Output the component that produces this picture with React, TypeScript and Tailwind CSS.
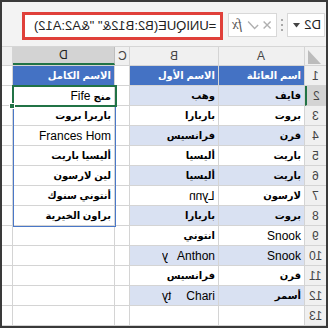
import React from "react";

const M = ({ children, className = "" }: { children: React.ReactNode; className?: string }) => (
  <span className={"inline-block [transform:scaleX(-1)] " + className}>{children}</span>
);

type Row = {
  n: number;
  d?: React.ReactNode;
  b?: React.ReactNode;
  a?: React.ReactNode;
};

const ar = (t: string) => (
  <span dir="rtl" className="font-bold text-[10px]">
    {t}
  </span>
);

const rows: Row[] = [
  { n: 1, d: ar("الاسم الكامل"), b: ar("الاسم الأول"), a: ar("اسم العائلة") },
  {
    n: 2,
    d: (
      <span dir="rtl">
        <span className="font-bold text-[10px]">منج</span> <span className="text-[12px]">Fife</span>
      </span>
    ),
    b: ar("وهب"),
    a: ar("فايف"),
  },
  { n: 3, d: ar("باربرا بروت"), b: ar("باربارا"), a: ar("بروت") },
  { n: 4, d: <span className="text-[12px]">Frances Hom</span>, b: ar("فرانسيس"), a: ar("قرن") },
  { n: 5, d: ar("أليسيا باريت"), b: ar("أليسيا"), a: ar("باريت") },
  { n: 6, d: ar("لين لارسون"), b: ar("أليسيا"), a: ar("باريت") },
  { n: 7, d: ar("أنتوني سنوك"), b: <M className="text-[12px]">Lynn</M>, a: ar("لارسون") },
  { n: 8, d: ar("براون الخيرية"), b: ar("باربارا"), a: ar("بروت") },
  { n: 9, b: ar("انتوني"), a: <span className="text-[12px]">Snook</span> },
  { n: 10, b: "anthon", a: <span className="text-[12px]">Snook</span> },
  { n: 11, b: ar("فرانسيس"), a: ar("قرن") },
  { n: 12, b: "chari", a: ar("أسمر") },
  { n: 13 },
];

export default function App() {
  return (
    <div className="w-[328px] h-[328px] border-2 border-[#3a3a3a] bg-white overflow-hidden flex flex-col font-['Liberation_Sans','DejaVu_Sans',sans-serif] text-[11px] text-black">
      {/* formula bar */}
      <div className="h-[45px] shrink-0 bg-[#f3f3f3] border-b border-[#d6d6d6] flex items-start pt-[10px] pl-[20px]">
        <div className="w-[201px] h-[28px] border-[3px] border-[#e0403a] bg-white flex items-center justify-end pr-[4px]">
          <M className="text-[13px] text-[#222] font-['Liberation_Sans',sans-serif]">=UNIQUE(B2:B12&amp;" "&amp;A2:A12)</M>
        </div>
        <div className="ml-[5px] mt-[1px] w-[49px] h-[24px] border border-[#d8d8d8] bg-white flex items-center justify-center">
          <div className="flex items-center gap-[3px] [transform:scaleX(-1)]">
            <svg width="10" height="10" viewBox="0 0 10 10">
              <path d="M1.5 1.5 L8.5 8.5 M8.5 1.5 L1.5 8.5" stroke="#b0b0b0" strokeWidth="1.4" fill="none" />
            </svg>
            <svg width="12" height="10" viewBox="0 0 12 10">
              <path d="M1 5 L4.5 8.5 L11 1.5" stroke="#b0b0b0" strokeWidth="1.4" fill="none" />
            </svg>
            <span className="font-['Liberation_Serif',serif] italic text-[14px] text-[#555] leading-none ml-[2px]">fx</span>
          </div>
        </div>
        <div className="w-[10px] h-[24px] mt-[1px] flex flex-col items-center justify-center gap-[3px]">
          <div className="w-[2px] h-[2px] bg-[#a8a8a8]" />
          <div className="w-[2px] h-[2px] bg-[#a8a8a8]" />
          <div className="w-[2px] h-[2px] bg-[#a8a8a8]" />
        </div>
        <div className="w-[38px] h-[24px] mt-[1px] border border-[#d8d8d8] bg-white flex items-center">
          <div className="w-full flex items-center justify-between pl-[3px] pr-[5px] [transform:scaleX(-1)]">
            <span className="text-[13px] text-[#222]">D2</span>
            <svg width="7" height="5" viewBox="0 0 7 5">
              <path d="M0 0 L7 0 L3.5 4.5 Z" fill="#444" />
            </svg>
          </div>
        </div>
      </div>

      {/* column headers */}
      <div className="h-[19px] shrink-0 flex bg-[#f0f0f0] text-[12px] text-[#444] border-b border-[#d4d4d4]">
        <div className="w-[11px] border-r border-[#d4d4d4]" />
        <div className="w-[102px] bg-[#d3d3d3] border-r border-[#bdbdbd] border-b-2 border-b-[#217346] flex items-center justify-center">
          <M className="text-[#222]">D</M>
        </div>
        <div className="w-[15px] border-r border-[#d4d4d4] flex items-center justify-center overflow-hidden">
          <M>C</M>
        </div>
        <div className="w-[89px] border-r border-[#d4d4d4] flex items-center justify-center">
          <M>B</M>
        </div>
        <div className="w-[86px] border-r border-[#d4d4d4] flex items-center justify-center">
          <M>A</M>
        </div>
        <div className="w-[21px] flex items-end pl-[3px] pb-[1px]">
          <svg width="13" height="14" viewBox="0 0 13 14">
            <path d="M0 0 L0 14 L13 14 Z" fill="#bcbcbc" />
          </svg>
        </div>
      </div>

      {/* rows */}
      <div className="relative flex flex-col">
        {rows.map((r) => {
          const head = r.n === 1;
          const band = !head && r.n <= 12 && r.n % 2 === 0;
          const tableBg = head ? "bg-[#4472c4] text-white" : band ? "bg-[#d9e1f2]" : "bg-white";
          const inTable = r.n <= 12;
          return (
            <div key={r.n} className="h-[20px] flex">
              <div className="w-[11px] border-r border-b border-[#d4d4d4]" />
              <div
                className={
                  "w-[102px] border-r border-b border-[#d4d4d4] flex items-center justify-end pr-[3px] whitespace-nowrap overflow-hidden " +
                  (head ? "bg-[#4472c4] text-white" : "bg-white")
                }
              >
                {r.d}
              </div>
              <div className="w-[15px] border-r border-b border-[#d4d4d4] bg-white" />
              <div
                className={
                  "w-[89px] border-r border-b border-[#d4d4d4] flex items-center pr-[3px] whitespace-nowrap " +
                  (inTable ? tableBg : "bg-white") +
                  (r.b === "anthon" || r.b === "chari" ? " justify-between pl-[32px]" : " justify-end")
                }
              >
                {r.b === "anthon" ? (
                  <>
                    <M className="text-[12px]">y</M>
                    <span className="text-[12px]">Anthon</span>
                  </>
                ) : r.b === "chari" ? (
                  <>
                    <M className="text-[12px]">ty</M>
                    <span className="text-[12px]">Chari</span>
                  </>
                ) : (
                  r.b
                )}
              </div>
              <div
                className={
                  "w-[86px] border-r border-b border-[#d4d4d4] flex items-center justify-end pr-[3px] whitespace-nowrap " +
                  (inTable ? tableBg : "bg-white")
                }
              >
                {r.a}
              </div>
              <div
                className={
                  "w-[21px] border-b border-[#d4d4d4] flex items-center justify-center text-[12px] text-[#444] " +
                  (r.n === 2 ? "bg-[#d3d3d3] border-l-2 border-l-[#217346]" : "bg-[#f0f0f0]")
                }
              >
                <M>{r.n}</M>
              </div>
            </div>
          );
        })}

        {/* spill range border */}
        <div className="absolute left-[11px] top-[20px] w-[103px] h-[141px] border border-[#4a78c8] pointer-events-none" />
        {/* active cell */}
        <div className="absolute left-[10px] top-[19px] w-[105px] h-[22px] border-2 border-[#217346] pointer-events-none" />
        {/* fill handle */}
        <div className="absolute left-[7px] top-[37px] w-[6px] h-[6px] bg-[#217346] border border-white pointer-events-none" />
      </div>
    </div>
  );
}
